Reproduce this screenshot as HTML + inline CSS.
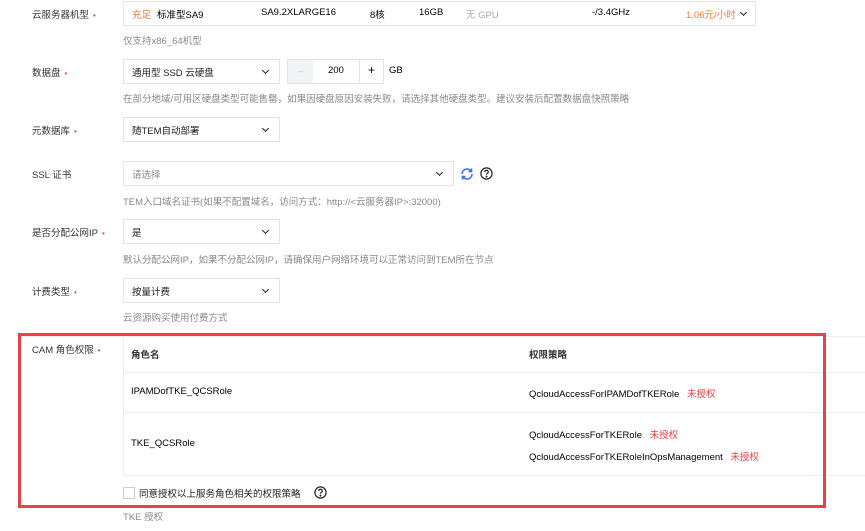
<!DOCTYPE html>
<html><head><meta charset="utf-8"><style>
*{margin:0;padding:0;box-sizing:border-box}
body{width:865px;height:531px;background:#fff;position:relative;overflow:hidden;font-family:"Liberation Sans","Noto Sans CJK SC",sans-serif;font-size:9.5px;color:#000}
.a{position:absolute;white-space:nowrap}
.lbl{left:32px;color:#333}
.lbl i{color:#e54545;font-style:normal;margin-left:4px;font-size:8px}
.box{position:absolute;border:1px solid #e2e4e8;background:#fff}
.hint{left:123px;color:#888}
.chev{position:absolute;width:5px;height:5px;border-right:1.5px solid #222;border-bottom:1.5px solid #222;transform:rotate(45deg)}
.sel{height:25px;left:123px;width:157px}
.sel span{position:absolute;left:8px;top:5px;color:#222}
.sel .chev{right:11px;top:8px}
.red{color:#e54545}
</style></head><body>
<div class="a lbl" style="top:7px">云服务器机型<i>•</i></div>
<div class="box" style="left:123px;top:1px;width:633px;height:25px">
<span class="a" style="left:8px;top:5px;color:#f07c36">充足</span>
<span class="a" style="left:33px;top:5px">标准型SA9</span>
<span class="a" style="left:137px;top:5px">SA9.2XLARGE16</span>
<span class="a" style="left:246px;top:5px">8核</span>
<span class="a" style="left:295px;top:5px">16GB</span>
<span class="a" style="left:342px;top:5px;color:#aaa">无 GPU</span>
<span class="a" style="left:468px;top:5px">-/3.4GHz</span>
<span class="a" style="left:562px;top:5px;color:#f07c36">1.06元/小时</span>
<div class="chev" style="left:617px;top:8px"></div>
</div>
<div class="a hint" style="top:33px">仅支持x86_64机型</div>

<div class="a lbl" style="top:65px">数据盘<i>•</i></div>
<div class="box sel" style="top:59px"><span>通用型 SSD 云硬盘</span><div class="chev"></div></div>
<div class="box" style="left:287px;top:59px;width:97px;height:25px">
<div class="a" style="left:0;top:0;width:25px;height:23px;background:#f2f3f5;color:#bbb;text-align:center;line-height:23px">–</div>
<span class="a" style="left:40px;top:5px">200</span>
<div class="a" style="left:71px;top:0;width:1px;height:23px;background:#e2e4e8"></div>
<span class="a" style="left:80px;top:3px;font-size:12px">+</span>
</div>
<div class="a" style="left:389px;top:65px">GB</div>
<div class="a hint" style="top:91px">在部分地域/可用区硬盘类型可能售罄，如果因硬盘原因安装失败，请选择其他硬盘类型。建议安装后配置数据盘快照策略</div>

<div class="a lbl" style="top:123px">元数据库<i>•</i></div>
<div class="box sel" style="top:117px"><span>随TEM自动部署</span><div class="chev"></div></div>

<div class="a lbl" style="top:167px">SSL 证书</div>
<div class="box sel" style="top:161px;width:331px"><span style="color:#888">请选择</span><div class="chev"></div></div>
<svg class="a" style="left:460px;top:167px" width="14" height="14" viewBox="0 0 14 14" fill="none" stroke="#3a6fe8" stroke-width="1.6"><path d="M2 7a5 5 0 0 1 9-3M12 7a5 5 0 0 1-9 3"/><path d="M11.5 1.5v3h-3M2.5 12.5v-3h3"/></svg>
<svg class="a" style="left:480px;top:167px" width="13" height="13" viewBox="0 0 13 13" fill="none" stroke="#222" stroke-width="1.2"><circle cx="6.5" cy="6.5" r="5.6"/><path d="M4.8 5a1.7 1.7 0 1 1 2.4 1.5c-.6.3-.7.6-.7 1.3"/><circle cx="6.5" cy="9.6" r=".4" fill="#222"/></svg>
<div class="a hint" style="top:194px">TEM入口域名证书(如果不配置域名，访问方式：http://&lt;云服务器IP&gt;:32000)</div>

<div class="a lbl" style="top:225px">是否分配公网IP<i>•</i></div>
<div class="box sel" style="top:219px"><span>是</span><div class="chev"></div></div>
<div class="a hint" style="top:252px">默认分配公网IP，如果不分配公网IP，请确保用户网络环境可以正常访问到TEM所在节点</div>

<div class="a lbl" style="top:284px">计费类型<i>•</i></div>
<div class="box sel" style="top:278px"><span>按量计费</span><div class="chev"></div></div>
<div class="a hint" style="top:310px">云资源购买使用付费方式</div>

<div class="a" style="left:18px;top:336px;width:847px;height:1px;background:#eee"></div>
<div class="box" style="left:123px;top:336px;width:760px;height:140px;border-color:#eceef1"></div>
<div class="a" style="left:123px;top:372px;width:742px;height:1px;background:#eceef1"></div>
<div class="a" style="left:123px;top:412px;width:742px;height:1px;background:#eceef1"></div>
<div class="a lbl" style="top:342px">CAM 角色权限<i>•</i></div>
<div class="a" style="left:131px;top:347px;font-weight:bold;color:#333">角色名</div>
<div class="a" style="left:529px;top:347px;font-weight:bold;color:#333">权限策略</div>
<div class="a" style="left:131px;top:386px">IPAMDofTKE_QCSRole</div>
<div class="a" style="left:529px;top:386px">QcloudAccessForIPAMDofTKERole <span class="red" style="margin-left:5px">未授权</span></div>
<div class="a" style="left:131px;top:438px">TKE_QCSRole</div>
<div class="a" style="left:529px;top:427px">QcloudAccessForTKERole <span class="red" style="margin-left:5px">未授权</span></div>
<div class="a" style="left:529px;top:449px">QcloudAccessForTKERoleInOpsManagement <span class="red" style="margin-left:5px">未授权</span></div>
<div class="box" style="left:123px;top:487px;width:12px;height:12px;border-color:#ccc"></div>
<div class="a" style="left:139px;top:486px;color:#222">同意授权以上服务角色相关的权限策略</div>
<svg class="a" style="left:314px;top:486px" width="13" height="13" viewBox="0 0 13 13" fill="none" stroke="#222" stroke-width="1.2"><circle cx="6.5" cy="6.5" r="5.6"/><path d="M4.8 5a1.7 1.7 0 1 1 2.4 1.5c-.6.3-.7.6-.7 1.3"/><circle cx="6.5" cy="9.6" r=".4" fill="#222"/></svg>
<div class="a" style="left:18px;top:333px;width:808px;height:175px;border:3px solid #e8414a"></div>
<div class="a hint" style="top:509px">TKE 授权</div>
</body></html>
